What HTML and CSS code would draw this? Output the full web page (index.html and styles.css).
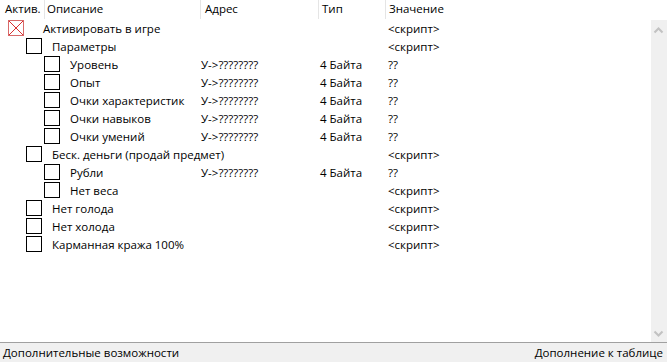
FILE: index.html
```html
<!DOCTYPE html>
<html>
<head>
<meta charset="utf-8">
<link rel="stylesheet" href="styles.css">
</head>
<body>
<div class="app">
  <div class="header">
    <div class="hcell c-act">Актив.</div>
    <div class="hcell c-desc">Описание</div>
    <div class="hcell c-addr">Адрес</div>
    <div class="hcell c-type">Тип</div>
    <div class="hcell c-val">Значение</div>
  </div>
  <div class="body">
    <div class="list">
      <div class="row">
        <div class="tree l0">
          <span class="cb cb-x"><svg width="16" height="16" viewBox="0 0 16 16"><rect x="0.5" y="0.5" width="15" height="15" fill="#fff" stroke="#d86a6a"/><path d="M1 1L15 15M15 1L1 15" stroke="#d83030" stroke-width="1"/></svg></span>
          <span class="lbl">Активировать в игре</span>
        </div>
        <div class="addr"></div><div class="type"></div><div class="val">&lt;скрипт&gt;</div>
      </div>
      <div class="row">
        <div class="tree l1"><span class="cb"></span><span class="lbl">Параметры</span></div>
        <div class="addr"></div><div class="type"></div><div class="val">&lt;скрипт&gt;</div>
      </div>
      <div class="row">
        <div class="tree l2"><span class="cb"></span><span class="lbl">Уровень</span></div>
        <div class="addr">У-&gt;????????</div><div class="type">4 Байта</div><div class="val">??</div>
      </div>
      <div class="row">
        <div class="tree l2"><span class="cb"></span><span class="lbl">Опыт</span></div>
        <div class="addr">У-&gt;????????</div><div class="type">4 Байта</div><div class="val">??</div>
      </div>
      <div class="row">
        <div class="tree l2"><span class="cb"></span><span class="lbl">Очки характеристик</span></div>
        <div class="addr">У-&gt;????????</div><div class="type">4 Байта</div><div class="val">??</div>
      </div>
      <div class="row">
        <div class="tree l2"><span class="cb"></span><span class="lbl">Очки навыков</span></div>
        <div class="addr">У-&gt;????????</div><div class="type">4 Байта</div><div class="val">??</div>
      </div>
      <div class="row">
        <div class="tree l2"><span class="cb"></span><span class="lbl">Очки умений</span></div>
        <div class="addr">У-&gt;????????</div><div class="type">4 Байта</div><div class="val">??</div>
      </div>
      <div class="row">
        <div class="tree l1"><span class="cb"></span><span class="lbl">Беск. деньги (продай предмет)</span></div>
        <div class="addr"></div><div class="type"></div><div class="val">&lt;скрипт&gt;</div>
      </div>
      <div class="row">
        <div class="tree l2"><span class="cb"></span><span class="lbl">Рубли</span></div>
        <div class="addr">У-&gt;????????</div><div class="type">4 Байта</div><div class="val">??</div>
      </div>
      <div class="row">
        <div class="tree l2"><span class="cb"></span><span class="lbl">Нет веса</span></div>
        <div class="addr"></div><div class="type"></div><div class="val">&lt;скрипт&gt;</div>
      </div>
      <div class="row">
        <div class="tree l1"><span class="cb"></span><span class="lbl">Нет голода</span></div>
        <div class="addr"></div><div class="type"></div><div class="val">&lt;скрипт&gt;</div>
      </div>
      <div class="row">
        <div class="tree l1"><span class="cb"></span><span class="lbl">Нет холода</span></div>
        <div class="addr"></div><div class="type"></div><div class="val">&lt;скрипт&gt;</div>
      </div>
      <div class="row">
        <div class="tree l1"><span class="cb"></span><span class="lbl">Карманная кража 100%</span></div>
        <div class="addr"></div><div class="type"></div><div class="val">&lt;скрипт&gt;</div>
      </div>
    </div>
    <div class="scrollbar">
      <svg class="arrow" width="17" height="17" viewBox="0 0 17 17"><path d="M4.5 10.5L8.5 6.5L12.5 10.5" fill="none" stroke="#c2c2c2" stroke-width="2"/></svg>
      <svg class="arrow" width="17" height="17" viewBox="0 0 17 17"><path d="M4.5 6.5L8.5 10.5L12.5 6.5" fill="none" stroke="#c2c2c2" stroke-width="2"/></svg>
    </div>
  </div>
  <div class="status">
    <span>Дополнительные возможности</span>
    <span>Дополнение к таблице</span>
  </div>
</div>
</body>
</html>
```
FILE: styles.css
```css
* { box-sizing: border-box; }
html, body { margin: 0; padding: 0; background: #fff; }
body {
  font-family: "Open Sans", "Noto Sans", sans-serif;
  font-size: 11.5px;
  color: #000;
  width: 667px;
  height: 362px;
  overflow: hidden;
}
.app { display: flex; flex-direction: column; height: 362px; }
.header { display: flex; height: 19px; align-items: center; flex: none; }
.hcell { height: 19px; line-height: 18px; padding-left: 3px; border-right: 1px solid #e5e5e5; white-space: nowrap; }
.c-act { width: 45px; padding-left: 5px; }
.c-desc { width: 156px; padding-left: 2px; }
.c-addr { width: 118px; padding-left: 4px; }
.c-type { width: 67px; padding-left: 3px; }
.c-val { flex: 1; border-right: none; padding-left: 3px; }
.body { display: flex; flex: 1; min-height: 0; }
.list { flex: 1; }
.row { display: flex; height: 18px; align-items: center; white-space: nowrap; }
.tree { width: 201px; display: flex; align-items: center; }
.cb { width: 16px; height: 16px; border: 1px solid #000; background: #fff; flex: none; display: block; }
.cb-x { border: none; }
.cb svg { display: block; }
.l0 { padding-left: 8px; }
.l0 .lbl { margin-left: 19px; }
.l1 { padding-left: 26px; }
.l1 .lbl { margin-left: 10px; }
.l2 { padding-left: 44px; }
.l2 .lbl { margin-left: 10px; }
.addr { width: 119px; }
.type { width: 68px; }
.val { flex: 1; }
.scrollbar {
  width: 16px;
  flex: none;
  background: #f0f0f0;
  display: flex;
  flex-direction: column;
  justify-content: space-between;
  margin-top: 1px;
  padding: 2px 0 0;
}
.arrow { display: block; margin-left: -1px; }
.status {
  flex: none;
  height: 20px;
  border-top: 1px solid #a0a0a0;
  background: #f0f0f0;
  display: flex;
  justify-content: space-between;
  align-items: center;
  padding: 0 4px 0 3px;
  white-space: nowrap;
}
```
